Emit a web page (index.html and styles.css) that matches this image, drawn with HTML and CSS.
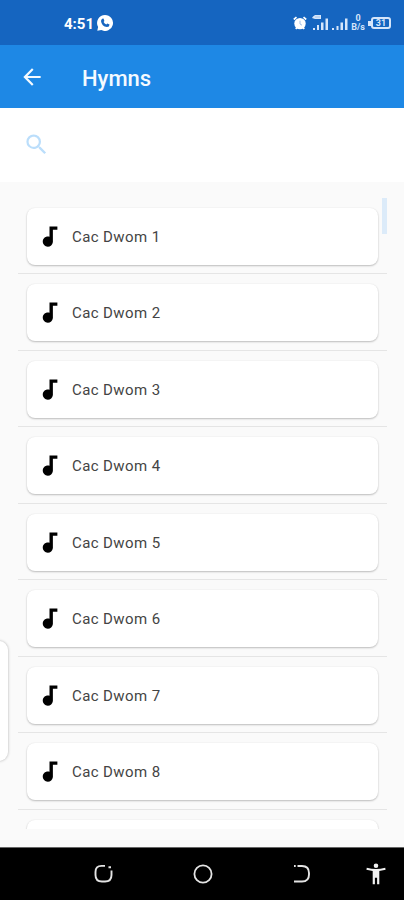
FILE: index.html
```
<!DOCTYPE html>
<html lang="en">
<head>
<meta charset="utf-8">
<title>Hymns</title>
<link rel="stylesheet" href="styles.css">
</head>
<body>
<div class="screen">
  <div class="status">
    <span class="clock">4:51</span>
    <svg class="chat" viewBox="0 0 16 16"><path fill="#fff" d="M8 0a8 8 0 1 1-3.700 15.100L.3 15.700 1.100 12A8 8 0 0 1 8 0z"/><path fill="#1765c0" d="M5.200 3.800 6.500 3.600 7.400 5.900 6.600 6.900Q7.500 8.700 9.300 9.400L10.300 8.400 12.500 9.500Q12.500 12 10 12.100 4.600 11.400 4 6 4.200 4.500 5.200 3.800z"/></svg>
    <div class="tray">
      <svg class="alarm" viewBox="0 0 14 14"><circle cx="7" cy="7.600" r="5.700" fill="#fff"/><path d="M.8 3.500 3.500 1.200M13.200 3.500 10.500 1.200M2.800 13l1.200-1.500M11.200 13 10 11.500" stroke="#fff" stroke-width="1.700"/><path d="M7 4.700V8l2 1.200" fill="none" stroke="#a0c0ea"/></svg>
      <svg class="signal1" viewBox="0 0 17 16"><path fill="#d5e5fa" d="M1 1.500 3 0h6v4H3L0 3zM1 13h2v2H1zM5 10h2v5H5zM9 7.500h2.500V15H9zM13.500 3.500H16V15h-2.500z"/><path d="M3 2h5" stroke="#a5c5ec"/></svg>
      <svg class="signal2" viewBox="0 0 17 16"><path fill="#d5e5fa" d="M0 13h2v2H0zM4.500 11h2v4h-2zM8.500 7.500H11V15H8.500zM13 3.500h2.500V15H13z"/></svg>
      <span class="rate"><span>0</span><span>B/s</span></span>
      <span class="nub"></span><span class="battery">31</span>
    </div>
  </div>
  <header class="bar">
    <svg class="back" viewBox="0 0 24 24"><path fill="#f4faff" d="M20 11H7.830l5.590-5.590L12 4l-8 8 8 8 1.410-1.410L7.830 13H20z"/></svg>
    <h1>Hymns</h1>
  </header>
  <div class="search">
    <svg viewBox="0 0 24 24"><path fill="#bbdefb" d="M15.500 14h-.79l-.28-.27A6.471 6.471 0 0 0 16 9.500 6.500 6.500 0 1 0 9.500 16c1.610 0 3.090-.59 4.230-1.570l.27.28v.79l5 4.990L20.490 19l-4.990-5zm-6 0C7.010 14 5 11.990 5 9.500S7.010 5 9.500 5 14 7.010 14 9.500 11.990 14 9.500 14z"/></svg>
  </div>
  <main class="body">
    <ul class="list">
      <li><div class="card"><svg viewBox="0 0 24 24"><use href="#note"/></svg><span>Cac Dwom 1</span></div></li>
      <li><div class="card"><svg viewBox="0 0 24 24"><use href="#note"/></svg><span>Cac Dwom 2</span></div></li>
      <li><div class="card"><svg viewBox="0 0 24 24"><use href="#note"/></svg><span>Cac Dwom 3</span></div></li>
      <li><div class="card"><svg viewBox="0 0 24 24"><use href="#note"/></svg><span>Cac Dwom 4</span></div></li>
      <li><div class="card"><svg viewBox="0 0 24 24"><use href="#note"/></svg><span>Cac Dwom 5</span></div></li>
      <li><div class="card"><svg viewBox="0 0 24 24"><use href="#note"/></svg><span>Cac Dwom 6</span></div></li>
      <li><div class="card"><svg viewBox="0 0 24 24"><use href="#note"/></svg><span>Cac Dwom 7</span></div></li>
      <li><div class="card"><svg viewBox="0 0 24 24"><use href="#note"/></svg><span>Cac Dwom 8</span></div></li>
      <li><div class="card"></div></li>
    </ul>
    <div class="thumb"></div>
    <div class="handle"></div>
  </main>
  <nav class="nav">
    <svg class="recent" viewBox="0 0 20 20"><path d="M11 1.900H7.500Q1.500 1.900 1.500 8v3q0 6.500 6.500 6.500h3q6.500 0 6.500-6.500V6.500M14.500 3.200h2.500" fill="none" stroke="#e4e4e4" stroke-width="1.900"/></svg>
    <svg class="home" viewBox="0 0 20 20"><circle cx="10" cy="10" r="8.600" fill="none" stroke="#e4e4e4" stroke-width="1.800"/></svg>
    <svg class="undo" viewBox="0 0 18 20"><path d="M4.500 2H9q7 0 7 7v1.500q0 7-7 7H1M1 2h1.700" fill="none" stroke="#e4e4e4" stroke-width="1.900"/></svg>
    <svg class="access" viewBox="0 0 20 22"><path fill="#f2f2f2" d="M10 .5a2.300 2.300 0 1 1 0 4.600 2.300 2.300 0 0 1 0-4.600zM.8 4.800Q10 7.300 19.200 4.800l.4 2L13.300 8v13.200h-2.200v-6.400H8.900v6.400H6.700V8L.4 6.800z"/></svg>
  </nav>
</div>
<svg class="defs"><defs><path id="note" d="M12 3v9.280c-.47-.17-.97-.28-1.500-.28C8.010 12 6 14.010 6 16.500S8.010 21 10.500 21c2.310 0 4.200-1.750 4.450-4H15V6h4V3z"/></defs></svg>
</body>
</html>
```
FILE: styles.css
```
* { box-sizing: border-box; }
body { margin: 0; font-family: Roboto, sans-serif; }
svg { display: block; flex: none; }
.defs { position: absolute; width: 0; height: 0; }
.screen { width: 404px; height: 900px; display: flex; flex-direction: column; overflow: hidden; background: #fafafa; }

.status { height: 45px; flex: none; display: flex; align-items: center; padding: 1px 13px 0 64px; background: #1565c0; color: #fff; }
.clock { font-size: 15px; font-weight: 700; width: 33px; line-height: 18px; padding-top: 1px; }
.chat { width: 16px; height: 16px; }
.tray { margin-left: auto; display: flex; align-items: center; }
.alarm { width: 14px; height: 14px; margin-right: 5px; }
.signal1 { width: 17px; height: 16px; margin-right: 3px; }
.signal2 { width: 17px; height: 16px; margin-right: 2px; }
.rate { display: flex; flex-direction: column; align-items: center; width: 14px; font-size: 9px; font-weight: 700; line-height: 9px; color: #d5e5fa; margin-right: 3px; }
.nub { width: 3px; height: 5px; background: #d5e5fa; }
.battery { width: 20px; height: 12px; border: 2px solid #d5e5fa; border-radius: 3px; font-size: 9px; font-weight: 700; line-height: 9px; text-align: center; color: #d5e5fa; }

.bar { height: 63px; flex: none; display: flex; align-items: center; padding: 0 0 0 19px; background: #1e88e5; }
.back { width: 26px; height: 26px; margin-right: 37px; }
.bar h1 { margin: 3px 0 0; font-size: 22px; font-weight: 500; color: #f4faff; }

.search { height: 74px; flex: none; padding: 23px 0 0 23px; background: #fff; }
.search svg { width: 27px; height: 27px; }

.body { position: relative; height: 665px; flex: none; padding: 15.500px 17px 0 18px; }
.list { list-style: none; margin: 0; padding: 0; height: 631px; overflow: hidden; }
.list li { height: 76.500px; padding: 10px 9px 0; border-bottom: 1.500px solid #e5e5e5; }
.card { height: 57px; display: flex; align-items: center; padding-left: 8.500px; border-radius: 8px; background: #fff; box-shadow: 0 1px 2px rgba(0,0,0,.24), 0 0 2px rgba(0,0,0,.06); }
.card svg { width: 27px; height: 27px; margin-right: 9.500px; }
.card span { font-size: 15px; letter-spacing: .4px; color: #444; margin-top: 1.500px; }
.thumb { position: absolute; left: 382px; top: 16px; width: 5px; height: 36px; background: #dcebf9; }
.handle { position: absolute; left: -10px; top: 459px; width: 18px; height: 120px; border-radius: 10px; background: #fff; box-shadow: 0 0 3px rgba(0,0,0,.3); }

.nav { height: 53px; flex: none; display: flex; align-items: center; padding-left: 94px; background: #000; border-top: 1px solid #666; }
.recent { width: 20px; height: 20px; margin-right: 79px; }
.home { width: 20px; height: 20px; margin-right: 80px; }
.undo { width: 18px; height: 20px; margin-right: 55px; }
.access { width: 20px; height: 22px; }
```
